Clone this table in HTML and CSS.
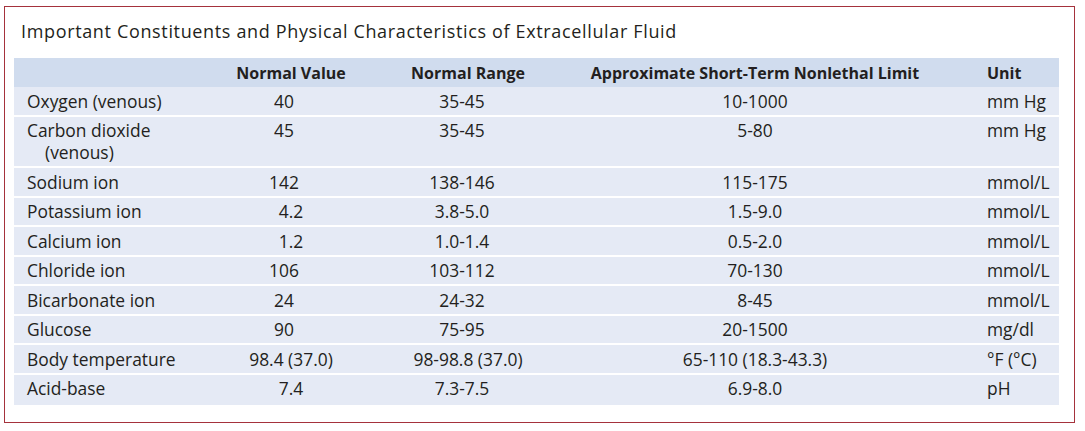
FILE: index.html
```html
<!DOCTYPE html>
<html>
<head>
<meta charset="utf-8">
<link rel="stylesheet" href="styles.css">
</head>
<body>
<div class="frame">
  <div class="title">Important Constituents and Physical Characteristics of Extracellular Fluid</div>
  <table class="tbl">
    <colgroup>
      <col class="c-name"><col class="c-nv"><col class="c-nr"><col class="c-lim"><col class="c-unit">
    </colgroup>
    <thead>
      <tr><th></th><th class="ctr">Normal Value</th><th class="ctr">Normal Range</th><th class="ctr">Approximate Short-Term Nonlethal Limit</th><th class="unit">Unit</th></tr>
    </thead>
    <tbody>
      <tr><td class="name">Oxygen (venous)</td><td class="ctr int">40</td><td class="ctr rng">35-45</td><td class="ctr">10-1000</td><td class="unit">mm Hg</td></tr>
      <tr><td class="name">Carbon dioxide<br>(venous)</td><td class="ctr int">45</td><td class="ctr rng">35-45</td><td class="ctr">5-80</td><td class="unit">mm Hg</td></tr>
      <tr><td class="name">Sodium ion</td><td class="ctr int">142</td><td class="ctr rng">138-146</td><td class="ctr">115-175</td><td class="unit">mmol/L</td></tr>
      <tr><td class="name">Potassium ion</td><td class="ctr">4.2</td><td class="ctr rng">3.8-5.0</td><td class="ctr">1.5-9.0</td><td class="unit">mmol/L</td></tr>
      <tr><td class="name">Calcium ion</td><td class="ctr">1.2</td><td class="ctr rng">1.0-1.4</td><td class="ctr">0.5-2.0</td><td class="unit">mmol/L</td></tr>
      <tr><td class="name">Chloride ion</td><td class="ctr int">106</td><td class="ctr rng">103-112</td><td class="ctr">70-130</td><td class="unit">mmol/L</td></tr>
      <tr><td class="name">Bicarbonate ion</td><td class="ctr int">24</td><td class="ctr rng">24-32</td><td class="ctr">8-45</td><td class="unit">mmol/L</td></tr>
      <tr><td class="name">Glucose</td><td class="ctr int">90</td><td class="ctr rng">75-95</td><td class="ctr">20-1500</td><td class="unit">mg/dl</td></tr>
      <tr><td class="name">Body temperature</td><td class="ctr">98.4 (37.0)</td><td class="ctr">98-98.8 (37.0)</td><td class="ctr">65-110 (18.3-43.3)</td><td class="unit">°F (°C)</td></tr>
      <tr><td class="name">Acid-base</td><td class="ctr">7.4</td><td class="ctr rng">7.3-7.5</td><td class="ctr">6.9-8.0</td><td class="unit">pH</td></tr>
    </tbody>
  </table>
</div>
</body>
</html>
```

FILE: styles.css
```css
html, body {
  margin: 0;
  padding: 0;
  background: #ffffff;
}

body {
  font-family: "Open Sans", "Noto Sans", sans-serif;
  color: #231f20;
}

.frame {
  box-sizing: border-box;
  margin: 6px 0 0 4px;
  width: 1071px;
  height: 417px;
  border: 1px solid #a5323c;
  padding: 12px 15px 0 9px;
}

.title {
  font-size: 18px;
  line-height: 24px;
  letter-spacing: 0.65px;
  padding-left: 7px;
  margin-bottom: 15px;
  white-space: nowrap;
}

.tbl {
  width: 1045px;
  table-layout: fixed;
  border-collapse: collapse;
  font-size: 17.4px;
  line-height: 22px;
}

.c-name { width: 206px; }
.c-nv { width: 142px; }
.c-nr { width: 212px; }
.c-lim { width: 362px; }
.c-unit { width: 123px; }

.tbl th {
  background: #d0dcee;
  font-weight: 700;
  font-size: 16px;
  height: 29px;
  padding: 0;
  vertical-align: middle;
  white-space: nowrap;
}

.tbl td {
  background: #e5eaf5;
  border-top: 2px solid #ffffff;
  padding: 2.5px 0 3px;
  vertical-align: top;
  white-space: nowrap;
}

.tbl tbody tr:first-child td {
  border-top: 0;
}

.tbl tbody tr:last-child td {
  padding-bottom: 6px;
}

.tbl .ctr { text-align: center; }

.tbl td.int { padding-right: 14px; }

.tbl td.rng { padding-right: 12px; }

.tbl td.name {
  text-align: left;
  text-indent: -18px;
  padding-left: 31px;
}

.tbl .unit {
  text-align: left;
  padding-left: 51px;
}
```
